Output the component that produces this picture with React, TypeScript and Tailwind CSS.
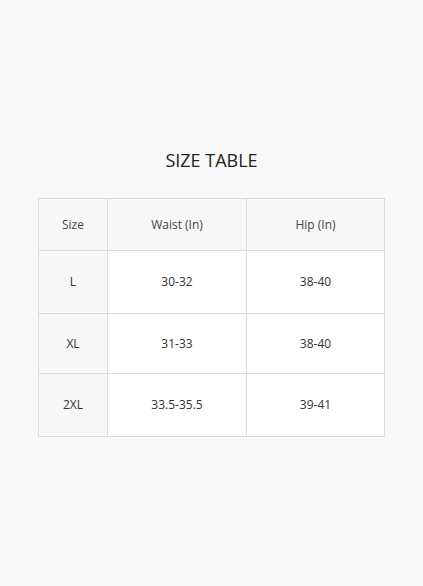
const ROWS = [
  { size: "L", waist: "30-32", hip: "38-40", h: "h-[63px]" },
  { size: "XL", waist: "31-33", hip: "38-40", h: "h-[60px]" },
  { size: "2XL", waist: "33.5-35.5", hip: "39-41", h: "h-[63px]" },
];

export default function App() {
  return (
    <div
      className="min-h-[586px] w-full bg-[#f8f8f8] pt-[147px] text-[#333]"
      style={{ fontFamily: '"Open Sans", "Liberation Sans", sans-serif' }}
    >
      <h1 className="text-center text-[18px] leading-[26px] text-[#222]">SIZE TABLE</h1>

      <div className="mx-[38px] mt-[25px]">
        <table className="w-[346px] table-fixed border-collapse text-[12px]">
          <colgroup>
            <col className="w-[69px]" />
            <col className="w-[139px]" />
            <col className="w-[138px]" />
          </colgroup>
          <thead>
            <tr className="h-[52px] bg-[#f7f7f7]">
              <th className="border border-[#dcdcdc] font-normal text-[#444]">Size</th>
              <th className="border border-[#dcdcdc] font-normal text-[#444]">Waist (In)</th>
              <th className="border border-[#dcdcdc] font-normal text-[#444]">Hip (In)</th>
            </tr>
          </thead>
          <tbody>
            {ROWS.map((r) => (
              <tr key={r.size} className={r.h}>
                <td className="border border-[#dcdcdc] bg-[#f7f7f7] text-center">{r.size}</td>
                <td className="border border-[#dcdcdc] bg-white text-center">{r.waist}</td>
                <td className="border border-[#dcdcdc] bg-white text-center">{r.hip}</td>
              </tr>
            ))}
          </tbody>
        </table>
      </div>
    </div>
  );
}
